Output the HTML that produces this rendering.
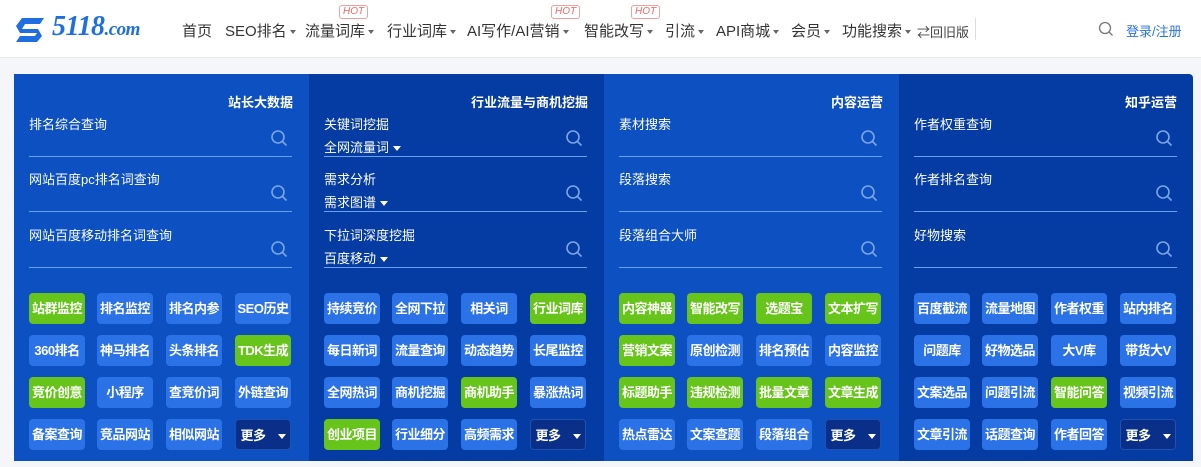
<!DOCTYPE html>
<html><head><meta charset="utf-8"><style>
*{margin:0;padding:0;box-sizing:border-box}
body{width:1201px;height:467px;overflow:hidden;background:#f4f6f9;font-family:"Liberation Sans","Noto Sans CJK SC",sans-serif;position:relative}
.hdr{position:absolute;left:0;top:0;width:1201px;height:58px;background:#fff;border-bottom:1px solid #e6e8ec}
.n{position:absolute;top:20px;font-size:15px;color:#333;white-space:nowrap}
.tri{display:inline-block;width:0;height:0;border-left:3.5px solid transparent;border-right:3.5px solid transparent;border-top:4px solid #666;vertical-align:middle;margin-left:3px}
.hot{position:absolute;top:5px;font-size:10px;font-style:italic;color:#e66;border:1px solid #f0a0a0;border-radius:3px;padding:0 3px;line-height:12px;font-family:"Liberation Sans",sans-serif}
.p{position:absolute;top:74px;height:387px;width:295px}
.l{background:#0c50c2}.d{background:#053ca3}
.t{position:absolute;right:16px;top:18px;color:#fff;font-weight:bold;font-size:13px}
.f{position:absolute;left:15px;width:263px;height:43px;border-bottom:1px solid #6aa0f0;color:#fff;font-size:13px}
.f span{position:absolute;top:0}
.f b{position:absolute;top:23px;font-weight:normal;font-size:13px}
.f b i{display:inline-block;border-left:4px solid transparent;border-right:4px solid transparent;border-top:5px solid #fff;vertical-align:middle;margin-left:4px}
.f svg{position:absolute;right:4px;top:15px}
.b{position:absolute;width:56px;height:31px;border-radius:4px;background:#2b72e6;color:#fff;font-size:13px;font-weight:bold;text-align:center;line-height:31px;white-space:nowrap;letter-spacing:-0.5px}
.g{background:#66c41a}
.m{background:#0a2f88;border:1px solid #2050b0}
.m i{display:inline-block;border-left:4px solid transparent;border-right:4px solid transparent;border-top:5px solid #fff;vertical-align:middle;margin-left:12px}
</style></head><body>
<div class="hdr">
<svg style="position:absolute;left:14px;top:17px" width="34" height="26" viewBox="0 0 34 26"><path d="M8 1h22l-4 6H11L8 12h16l4 7-5 6H2l4-6h15l2-3H6L2 9z" fill="#1f6fe0"/></svg>
<div style="position:absolute;left:52px;top:11px;font-family:'Liberation Serif',serif;font-style:italic;font-weight:bold;color:#1f6fe0;font-size:28px;letter-spacing:-0.5px">5118<span style="font-size:19px">.com</span></div>
<div class="n" style="left:182px">首页</div>
<div class="n" style="left:225px">SEO排名<span class="tri"></span></div>
<div class="n" style="left:305px">流量词库<span class="tri"></span></div><div class="hot" style="left:339px">HOT</div>
<div class="n" style="left:387px">行业词库<span class="tri"></span></div>
<div class="n" style="left:467px">AI写作/AI营销<span class="tri"></span></div><div class="hot" style="left:551px">HOT</div>
<div class="n" style="left:584px">智能改写<span class="tri"></span></div><div class="hot" style="left:631px">HOT</div>
<div class="n" style="left:665px">引流<span class="tri"></span></div>
<div class="n" style="left:716px">API商城<span class="tri"></span></div>
<div class="n" style="left:791px">会员<span class="tri"></span></div>
<div class="n" style="left:842px">功能搜索<span class="tri"></span></div>
<div class="n" style="left:917px;font-size:13px;top:22px;color:#444">⇄回旧版</div>
<div style="position:absolute;left:975px;top:18px;width:1px;height:22px;background:#ddd"></div>
<svg style="position:absolute;left:1098px;top:21px" width="16" height="16" viewBox="0 0 16 16"><circle cx="7" cy="7" r="5.5" fill="none" stroke="#777" stroke-width="1.3"/><path d="M11 11l3.5 3.5" stroke="#777" stroke-width="1.3"/></svg>
<div class="n" style="left:1126px;top:21px;font-size:13px;color:#2a74d8">登录/注册</div>
</div>

<div class="p l" style="left:14px">
<div class="t">站长大数据</div>
<div class="f" style="top:40px"><span>排名综合查询</span><svg width="18" height="18" viewBox="0 0 18 18"><circle cx="8" cy="8" r="6" fill="none" stroke="#7aa6e6" stroke-width="1.6"/><path d="M12.5 12.5l4 4" stroke="#7aa6e6" stroke-width="1.6"/></svg></div>
<div class="f" style="top:95px"><span>网站百度pc排名词查询</span><svg width="18" height="18" viewBox="0 0 18 18"><circle cx="8" cy="8" r="6" fill="none" stroke="#7aa6e6" stroke-width="1.6"/><path d="M12.5 12.5l4 4" stroke="#7aa6e6" stroke-width="1.6"/></svg></div>
<div class="f" style="top:151px"><span>网站百度移动排名词查询</span><svg width="18" height="18" viewBox="0 0 18 18"><circle cx="8" cy="8" r="6" fill="none" stroke="#7aa6e6" stroke-width="1.6"/><path d="M12.5 12.5l4 4" stroke="#7aa6e6" stroke-width="1.6"/></svg></div>
<div class="b g" style="left:15px;top:219px">站群监控</div><div class="b" style="left:83px;top:219px">排名监控</div><div class="b" style="left:152px;top:219px">排名内参</div><div class="b" style="left:221px;top:219px">SEO历史</div>
<div class="b" style="left:15px;top:261px">360排名</div><div class="b" style="left:83px;top:261px">神马排名</div><div class="b" style="left:152px;top:261px">头条排名</div><div class="b g" style="left:221px;top:261px">TDK生成</div>
<div class="b g" style="left:15px;top:303px">竞价创意</div><div class="b" style="left:83px;top:303px">小程序</div><div class="b" style="left:152px;top:303px">查竞价词</div><div class="b" style="left:221px;top:303px">外链查询</div>
<div class="b" style="left:15px;top:345px">备案查询</div><div class="b" style="left:83px;top:345px">竞品网站</div><div class="b" style="left:152px;top:345px">相似网站</div><div class="b m" style="left:221px;top:345px">更多<i></i></div>
</div>

<div class="p d" style="left:309px">
<div class="t">行业流量与商机挖掘</div>
<div class="f" style="top:40px"><span>关键词挖掘</span><b>全网流量词<i></i></b><svg width="18" height="18" viewBox="0 0 18 18"><circle cx="8" cy="8" r="6" fill="none" stroke="#7aa6e6" stroke-width="1.6"/><path d="M12.5 12.5l4 4" stroke="#7aa6e6" stroke-width="1.6"/></svg></div>
<div class="f" style="top:95px"><span>需求分析</span><b>需求图谱<i></i></b><svg width="18" height="18" viewBox="0 0 18 18"><circle cx="8" cy="8" r="6" fill="none" stroke="#7aa6e6" stroke-width="1.6"/><path d="M12.5 12.5l4 4" stroke="#7aa6e6" stroke-width="1.6"/></svg></div>
<div class="f" style="top:151px"><span>下拉词深度挖掘</span><b>百度移动<i></i></b><svg width="18" height="18" viewBox="0 0 18 18"><circle cx="8" cy="8" r="6" fill="none" stroke="#7aa6e6" stroke-width="1.6"/><path d="M12.5 12.5l4 4" stroke="#7aa6e6" stroke-width="1.6"/></svg></div>
<div class="b" style="left:15px;top:219px">持续竞价</div><div class="b" style="left:83px;top:219px">全网下拉</div><div class="b" style="left:152px;top:219px">相关词</div><div class="b g" style="left:221px;top:219px">行业词库</div>
<div class="b" style="left:15px;top:261px">每日新词</div><div class="b" style="left:83px;top:261px">流量查询</div><div class="b" style="left:152px;top:261px">动态趋势</div><div class="b" style="left:221px;top:261px">长尾监控</div>
<div class="b" style="left:15px;top:303px">全网热词</div><div class="b" style="left:83px;top:303px">商机挖掘</div><div class="b g" style="left:152px;top:303px">商机助手</div><div class="b" style="left:221px;top:303px">暴涨热词</div>
<div class="b g" style="left:15px;top:345px">创业项目</div><div class="b" style="left:83px;top:345px">行业细分</div><div class="b" style="left:152px;top:345px">高频需求</div><div class="b m" style="left:221px;top:345px">更多<i></i></div>
</div>

<div class="p l" style="left:604px">
<div class="t">内容运营</div>
<div class="f" style="top:40px"><span>素材搜索</span><svg width="18" height="18" viewBox="0 0 18 18"><circle cx="8" cy="8" r="6" fill="none" stroke="#7aa6e6" stroke-width="1.6"/><path d="M12.5 12.5l4 4" stroke="#7aa6e6" stroke-width="1.6"/></svg></div>
<div class="f" style="top:95px"><span>段落搜索</span><svg width="18" height="18" viewBox="0 0 18 18"><circle cx="8" cy="8" r="6" fill="none" stroke="#7aa6e6" stroke-width="1.6"/><path d="M12.5 12.5l4 4" stroke="#7aa6e6" stroke-width="1.6"/></svg></div>
<div class="f" style="top:151px"><span>段落组合大师</span><svg width="18" height="18" viewBox="0 0 18 18"><circle cx="8" cy="8" r="6" fill="none" stroke="#7aa6e6" stroke-width="1.6"/><path d="M12.5 12.5l4 4" stroke="#7aa6e6" stroke-width="1.6"/></svg></div>
<div class="b g" style="left:15px;top:219px">内容神器</div><div class="b g" style="left:83px;top:219px">智能改写</div><div class="b g" style="left:152px;top:219px">选题宝</div><div class="b g" style="left:221px;top:219px">文本扩写</div>
<div class="b g" style="left:15px;top:261px">营销文案</div><div class="b" style="left:83px;top:261px">原创检测</div><div class="b" style="left:152px;top:261px">排名预估</div><div class="b" style="left:221px;top:261px">内容监控</div>
<div class="b g" style="left:15px;top:303px">标题助手</div><div class="b g" style="left:83px;top:303px">违规检测</div><div class="b g" style="left:152px;top:303px">批量文章</div><div class="b g" style="left:221px;top:303px">文章生成</div>
<div class="b" style="left:15px;top:345px">热点雷达</div><div class="b" style="left:83px;top:345px">文案查题</div><div class="b" style="left:152px;top:345px">段落组合</div><div class="b m" style="left:221px;top:345px">更多<i></i></div>
</div>

<div class="p d" style="left:899px;width:294px;border-top-right-radius:4px">
<div class="t">知乎运营</div>
<div class="f" style="top:40px"><span>作者权重查询</span><svg width="18" height="18" viewBox="0 0 18 18"><circle cx="8" cy="8" r="6" fill="none" stroke="#7aa6e6" stroke-width="1.6"/><path d="M12.5 12.5l4 4" stroke="#7aa6e6" stroke-width="1.6"/></svg></div>
<div class="f" style="top:95px"><span>作者排名查询</span><svg width="18" height="18" viewBox="0 0 18 18"><circle cx="8" cy="8" r="6" fill="none" stroke="#7aa6e6" stroke-width="1.6"/><path d="M12.5 12.5l4 4" stroke="#7aa6e6" stroke-width="1.6"/></svg></div>
<div class="f" style="top:151px"><span>好物搜索</span><svg width="18" height="18" viewBox="0 0 18 18"><circle cx="8" cy="8" r="6" fill="none" stroke="#7aa6e6" stroke-width="1.6"/><path d="M12.5 12.5l4 4" stroke="#7aa6e6" stroke-width="1.6"/></svg></div>
<div class="b" style="left:15px;top:219px">百度截流</div><div class="b" style="left:83px;top:219px">流量地图</div><div class="b" style="left:152px;top:219px">作者权重</div><div class="b" style="left:221px;top:219px">站内排名</div>
<div class="b" style="left:15px;top:261px">问题库</div><div class="b" style="left:83px;top:261px">好物选品</div><div class="b" style="left:152px;top:261px">大V库</div><div class="b" style="left:221px;top:261px">带货大V</div>
<div class="b" style="left:15px;top:303px">文案选品</div><div class="b" style="left:83px;top:303px">问题引流</div><div class="b g" style="left:152px;top:303px">智能问答</div><div class="b" style="left:221px;top:303px">视频引流</div>
<div class="b" style="left:15px;top:345px">文章引流</div><div class="b" style="left:83px;top:345px">话题查询</div><div class="b" style="left:152px;top:345px">作者回答</div><div class="b m" style="left:221px;top:345px">更多<i></i></div>
</div>
</body></html>
